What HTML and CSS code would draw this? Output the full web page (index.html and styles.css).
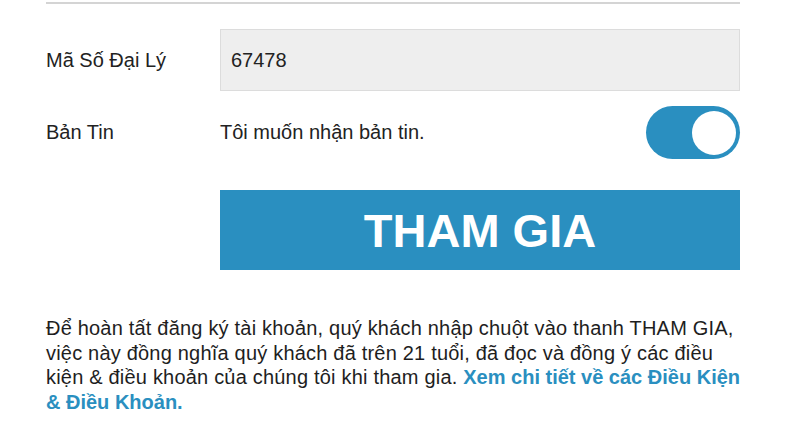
FILE: index.html
```html
<!DOCTYPE html>
<html lang="vi">
<head>
<meta charset="utf-8">
<link rel="stylesheet" href="styles.css">
</head>
<body>
<div class="form">
  <div class="row row-agent">
    <div class="label">Mã Số Đại Lý</div>
    <div class="field"><div class="input">67478</div></div>
  </div>
  <div class="row row-news">
    <div class="label">Bản Tin</div>
    <div class="field news">
      <span>Tôi muốn nhận bản tin.</span>
      <span class="toggle"><span class="knob"></span></span>
    </div>
  </div>
  <div class="row row-btn">
    <div class="label"></div>
    <div class="field"><div class="btn">THAM GIA</div></div>
  </div>
  <p class="terms">Để hoàn tất đăng ký tài khoản, quý khách nhập chuột vào thanh THAM GIA, việc này đồng nghĩa quý khách đã trên 21 tuổi, đã đọc và đồng ý các điều kiện &amp; điều khoản của chúng tôi khi tham gia. <a class="link">Xem chi tiết về các Điều Kiện &amp; Điều Khoản.</a></p>
</div>
</body>
</html>
```
FILE: styles.css
```css
html, body { margin: 0; padding: 0; background: #fff; }
body { font-family: "Liberation Sans", Arial, sans-serif; color: #222; }
.form {
  margin-left: 46px;
  width: 694px;
  border-top: 2px solid #d4d4d4;
  margin-top: 2px;
  padding-top: 25px;
}
.row { display: flex; align-items: center; }
.label { width: 174px; flex: none; font-size: 20px; }
.field { flex: 1; }
.input {
  box-sizing: border-box;
  height: 62px;
  background: #eeeeee;
  border: 1px solid #dcdcdc;
  padding-left: 10px;
  display: flex; align-items: center;
  font-size: 20px;
}
.row-news { margin-top: 15px; }
.news { display: flex; align-items: center; justify-content: space-between; font-size: 20px; }
.toggle {
  width: 94px; height: 53px; border-radius: 27px;
  background: #2a8fc0; box-sizing: border-box; padding: 5px 4px;
  display: flex; justify-content: flex-end; align-items: center;
}
.knob { width: 44px; height: 44px; border-radius: 50%; background: #fff; }
.row-btn { margin-top: 31px; }
.btn {
  height: 80px; background: #2a8fc0; color: #fff;
  font-weight: bold; font-size: 47px;
  display: flex; align-items: center; justify-content: center;
}
.terms {
  margin: 46px -12px 0 0;
  font-size: 20px; line-height: 24.5px; color: #1e1e1e;
  letter-spacing: 0.2px;
}
.link { color: #2a8fc0; font-weight: bold; letter-spacing: 0; }
```
